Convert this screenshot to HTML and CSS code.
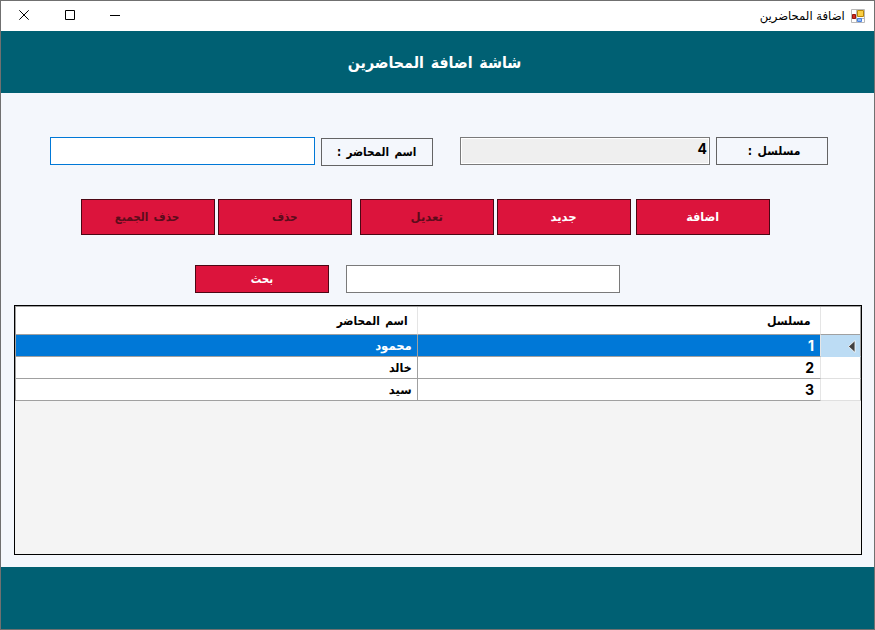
FILE: index.html
```html
<!DOCTYPE html>
<html lang="ar">
<head>
<meta charset="utf-8">
<title>اضافة المحاضرين</title>
<link rel="stylesheet" href="styles.css">
</head>
<body>
<div class="window">
  <div class="titlebar">
    <svg class="controls" width="140" height="30" viewBox="1 1 140 30" fill="none" stroke="#000" stroke-width="1">
      <path d="M19.3 10.3l9.4 9.4M28.7 10.3l-9.4 9.4"/>
      <path d="M65.5 10.5h9v9h-9zM110 15.5h10"/>
    </svg>
    <div class="caption">
      <span class="caption-text" dir="rtl">اضافة المحاضرين</span>
      <svg width="14" height="14" viewBox="0 0 14 14">
        <path fill="#fff" stroke="#b8b8b8" d="M.5.5h13v13H.5zM5.5.5v13M.5 9.5h13"/>
        <path fill="#d22b20" stroke="#96150e" d="M1.500 5.500h3v4h-3z"/>
        <path fill="#fbcf45" stroke="#b98707" d="M6.500 1.500h6v6h-6z"/>
        <path fill="#8fbcf8" stroke="#4a80e0" d="M6.500 9.500h4v3h-4z"/>
      </svg>
    </div>
  </div>
  <header class="banner"><h1 dir="rtl">شاشة اضافة المحاضرين</h1></header>
  <main>
    <div class="fields">
      <div class="input name focused"></div>
      <div class="label lower"><span dir="rtl">اسم المحاضر :</span></div>
      <div class="input serial"><b>4</b></div>
      <div class="label"><span class="mid" dir="rtl">مسلسل :</span></div>
    </div>
    <div class="actions">
      <button class="btn off"><span dir="rtl">حذف الجميع</span></button>
      <button class="btn off"><span>حذف</span></button>
      <button class="btn off edit"><span class="wide">تعديل</span></button>
      <button class="btn"><span class="wide">جديد</span></button>
      <button class="btn add"><span>اضافة</span></button>
    </div>
    <div class="search">
      <button class="btn"><span>بحث</span></button>
      <div class="input query"></div>
    </div>
    <div class="grid">
      <div class="row head"><div class="cell c1"><span dir="rtl">اسم المحاضر</span></div><div class="cell c2"><span class="mid">مسلسل</span></div><div class="cell c3"></div></div>
      <div class="row selected"><div class="cell c1"><span class="wide">محمود</span></div><div class="cell c2"><b>1</b></div><div class="cell c3"><svg width="8" height="13" viewBox="0 0 8 13"><path d="M7 .5v12L.5 6.500z" fill="#404040" stroke="#fff" stroke-width=".8"/></svg></div></div>
      <div class="row"><div class="cell c1"><span class="mid">خالد</span></div><div class="cell c2"><b>2</b></div><div class="cell c3"></div></div>
      <div class="row"><div class="cell c1"><span class="wide">سيد</span></div><div class="cell c2"><b>3</b></div><div class="cell c3"></div></div>
    </div>
  </main>
  <footer></footer>
</div>
</body>
</html>
```
FILE: styles.css
```css
* { box-sizing: border-box; }
body { margin: 0; font: bold 12px/16px "DejaVu Sans", sans-serif; color: #000; }
.window { width: 875px; height: 630px; border: 1px solid #707070; background: #f4f7fc; display: flex; flex-direction: column; }
.titlebar { height: 30px; background: #fff; display: flex; justify-content: space-between; }
.caption { display: flex; align-items: center; gap: 6px; padding-right: 9px; font-weight: normal; font-size: 12px; }
.caption svg { margin-bottom: 1px; }
.caption-text { transform: scaleX(.97); transform-origin: right; }
.banner, footer { height: 62px; background: #006073; color: #fff; flex: none; }
.banner { display: flex; justify-content: center; align-items: center; padding: 2px 6px 0 0; }
h1 { margin: 0; font-size: 16px; line-height: 20px; word-spacing: 2px; transform: scaleX(.89); }
main { height: 474px; padding: 44px 12px 0 13px; }
.fields { display: flex; height: 29px; padding-left: 36px; }
.input { height: 28px; background: #fff; border: 1px solid #7a7a7a; }
.name { width: 265px; margin-right: 6px; }
.focused { border-color: #0078d7; }
.serial { width: 250px; margin: 0 6px 0 27px; background: #efefef; box-shadow: inset 0 0 0 1px #fff; text-align: right; padding: 3px 2px; }
b { font: bold 14px/16px Inter, "Liberation Sans", sans-serif; }
.cell b { padding-right: 1px; }
.label { width: 112px; height: 28px; border: 1px solid #646464; display: flex; align-items: center; justify-content: center; }
.lower { margin-top: 1px; }
.label span, .btn span, .cell span { word-spacing: 2px; transform: scaleX(.87); }
.label .mid { transform: scaleX(.9); padding-left: 4px; }
.cell span { transform: scaleX(.88); transform-origin: right; }
.cell .mid { transform: scaleX(.92); }
.btn .wide, .cell .wide { transform: scaleX(.97); }
.actions { display: flex; gap: 3px; margin-top: 33px; padding-left: 67px; }
.btn { width: 134px; height: 36px; padding: 0 1px 0 0; border: 1px solid #4c0714; background: #dc143c; color: #fff; font: inherit; display: flex; align-items: center; justify-content: center; }
.btn.off { color: #5c0c1b; }
.edit { margin-left: 5px; }
.add { margin-left: 2px; }
.btn.add span { transform: scaleX(.93); }
.search { display: flex; gap: 17px; margin-top: 30px; padding-left: 181px; }
.search .btn { height: 28px; }
.query { width: 274px; }
.grid { width: 848px; height: 250px; margin-top: 12px; border: 1px solid #000; background: #f4f4f4; }
.row { display: flex; height: 22px; background: #fff; border-left: 1px solid #a0a0a0; }
.head { height: 29px; border-top: 1px solid #a0a0a0; }
.cell { display: flex; align-items: center; justify-content: flex-end; border-right: 1px solid #a0a0a0; border-bottom: 1px solid #a0a0a0; padding-right: 5px; }
.c1 { width: 402px; }
.c2 { width: 403px; border-right-color: #e5e5e5; }
.c3 { width: 40px; border-bottom-color: #e0e0e0; padding: 2px 4px 0 0; }
.head .cell { padding-right: 9px; border-bottom-color: #a0a0a0; }
.head .c1 { border-right-color: #e5e5e5; }
.head span { padding-right: 1px; }
.selected .c1, .selected .c2 { background: #0078d7; color: #fff; }
.selected .c3 { background: #bcdcf4; border-bottom-color: #bcdcf4; }
```
